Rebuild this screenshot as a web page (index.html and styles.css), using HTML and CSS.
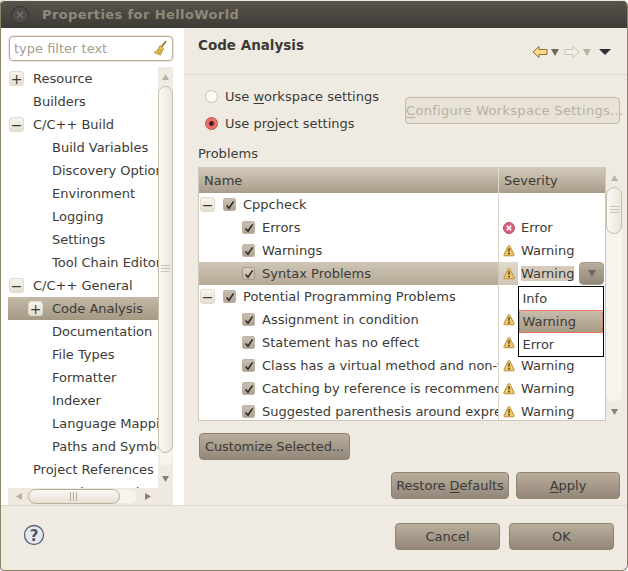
FILE: index.html
```html
<!DOCTYPE html>
<html lang="en">
<head>
<meta charset="utf-8">
<title>Properties for HelloWorld</title>
<link rel="stylesheet" href="styles.css">
</head>
<body>
<svg class="defs" width="0" height="0" aria-hidden="true">
  <defs>
    <symbol id="warn" viewBox="0 0 12 13">
      <path d="M6 1.500 Q6.600 1.500 7 2.300 L11 10.400 Q11.500 11.800 10.200 11.800 H1.800 Q.5 11.800 1 10.400 L5 2.300 Q5.400 1.500 6 1.500Z" fill="#f0c766" stroke="#b78f3c" stroke-linejoin="round"/>
      <path d="M5.200 4.200h1.600l-.3 4h-1zM5.200 9h1.600v1.500h-1.600z" fill="#4a3a20"/>
    </symbol>
    <symbol id="err" viewBox="0 0 12 12">
      <circle cx="6" cy="6" r="5.500" fill="#d9607a" stroke="#b65065"/>
      <path d="M3.800 3.800l4.400 4.400M8.200 3.800l-4.400 4.400" stroke="#fff" stroke-width="1.600"/>
    </symbol>
    <symbol id="chk" viewBox="0 0 12 12">
      <path d="M2.600 6.400l2.400 2.800L9.600 2.400" fill="none" stroke="#2d2a26" stroke-width="1.600"/>
    </symbol>
    <symbol id="up" viewBox="0 0 7 6"><path d="M3.500 0L7 6H0z"/></symbol>
    <symbol id="down" viewBox="0 0 7 6"><path d="M0 0H7L3.500 6z"/></symbol>
    <symbol id="left" viewBox="0 0 6 7"><path d="M0 3.500L6 0V7z"/></symbol>
    <symbol id="right" viewBox="0 0 6 7"><path d="M6 3.500L0 7V0z"/></symbol>
    <symbol id="grip-v" viewBox="0 0 9 9"><path d="M0 .5H9M0 3.500H9M0 6.500H9" stroke="#c9c2b5" fill="none"/></symbol>
    <symbol id="grip-h" viewBox="0 0 9 9"><path d="M.5 0V9M3.500 0V9M6.500 0V9" stroke="#b5ac9c" fill="none"/></symbol>
  </defs>
</svg>
<div class="window">
  <header class="titlebar">
    <span class="close-btn"><svg viewBox="0 0 10 10" width="10" height="10"><path d="M2 2l6 6M8 2l-6 6" stroke="#77736c" stroke-width="1.400"/></svg></span>
    <span class="title">Properties for HelloWorld</span>
  </header>
  <div class="main">
    <aside class="side">
      <div class="filter">
        <span class="filter-text">type filter text</span>
        <svg class="broom" width="14" height="17" viewBox="0 0 14 17"><path d="M13 1L8.500 7" stroke="#9b7a3a" stroke-width="1.800"/><path d="M7 5.500l3.500 3L7.500 15 1 12.500C3.500 11.500 5.500 9 7 5.500z" fill="#e8c34e" stroke="#a98a34" stroke-width=".8"/><path d="M6 9l-1 4M8 9.500L6.500 14" stroke="#a98a34" stroke-width=".7"/></svg>
      </div>
      <div class="tree-box">
        <div class="tree-view">
          <ul class="tree">
            <li class="node l0"><span class="exp">+</span><span>Resource</span></li>
            <li class="node l0"><span class="noexp"></span><span>Builders</span></li>
            <li class="node l0"><span class="exp">&minus;</span><span>C/C++ Build</span></li>
            <li class="node l1"><span>Build Variables</span></li>
            <li class="node l1"><span>Discovery Options</span></li>
            <li class="node l1"><span>Environment</span></li>
            <li class="node l1"><span>Logging</span></li>
            <li class="node l1"><span>Settings</span></li>
            <li class="node l1"><span>Tool Chain Editor</span></li>
            <li class="node l0"><span class="exp">&minus;</span><span>C/C++ General</span></li>
            <li class="node l1 sel"><span class="exp exp-sel">+</span><span>Code Analysis</span></li>
            <li class="node l1"><span>Documentation</span></li>
            <li class="node l1"><span>File Types</span></li>
            <li class="node l1"><span>Formatter</span></li>
            <li class="node l1"><span>Indexer</span></li>
            <li class="node l1"><span>Language Mappings</span></li>
            <li class="node l1"><span>Paths and Symbols</span></li>
            <li class="node l0"><span class="noexp"></span><span>Project References</span></li>
            <li class="node l0"><span class="noexp"></span><span>Run/Debug Settings</span></li>
          </ul>
          <div class="vscroll tree-vs">
            <svg class="arr" width="7" height="6"><use href="#up"/></svg>
            <div class="vtrack"><div class="vthumb tree-thumb"><svg width="9" height="9"><use href="#grip-v"/></svg></div></div>
            <svg class="arr arr-mid" width="7" height="6"><use href="#down"/></svg>
          </div>
        </div>
        <div class="hscroll">
          <svg class="arr" width="6" height="7"><use href="#left"/></svg>
          <div class="htrack"><div class="hthumb"><svg width="9" height="9"><use href="#grip-h"/></svg></div></div>
          <svg class="arr arr-mid" width="6" height="7"><use href="#right"/></svg>
        </div>
      </div>
    </aside>
    <section class="pane">
      <div class="pane-head">
        <h1 class="pane-title">Code Analysis</h1>
        <div class="nav">
          <svg width="16" height="14" viewBox="0 0 16 14"><path d="M1 7L7 1.500V4.500H15V9.500H7V12.500Z" fill="#fbd98a" stroke="#8a7230" stroke-width="1"/></svg>
          <svg class="nav-a" width="8" height="7"><use href="#down"/></svg>
          <svg class="nav-gap" width="16" height="14" viewBox="0 0 16 14"><path d="M15 7L9 1.500V4.500H1V9.500H9V12.500Z" fill="#f2efe9" stroke="#c9c6c0" stroke-width="1"/></svg>
          <svg class="nav-b" width="8" height="7"><use href="#down"/></svg>
          <svg class="nav-c" width="12" height="6" viewBox="0 0 12 6"><path d="M0 0H12L6 6z"/></svg>
        </div>
      </div>
      <div class="pane-body">
        <div class="scope">
          <div class="radios">
            <label class="radio-row"><span class="radio"></span><span>Use <u>w</u>orkspace settings</span></label>
            <label class="radio-row"><span class="radio radio-on"></span><span>Use pr<u>o</u>ject settings</span></label>
          </div>
          <button class="btn btn-off" type="button"><u>C</u>onfigure Workspace Settings...</button>
        </div>
        <div class="problems-label">Problems</div>
        <div class="table-wrap">
          <div class="table">
            <div class="thead"><div class="th th-name">Name</div><div class="th">Severity</div></div>
            <div class="row group"><div class="c-name"><span class="exp">&minus;</span><span class="check"><svg width="12" height="12"><use href="#chk"/></svg></span><span class="lbl">Cppcheck</span></div><div class="c-sev"></div></div>
            <div class="row"><div class="c-name child"><span class="check"><svg width="12" height="12"><use href="#chk"/></svg></span><span class="lbl">Errors</span></div><div class="c-sev"><svg class="sev-i" width="12" height="12"><use href="#err"/></svg><span>Error</span></div></div>
            <div class="row"><div class="c-name child"><span class="check"><svg width="12" height="12"><use href="#chk"/></svg></span><span class="lbl">Warnings</span></div><div class="c-sev"><svg class="sev-i" width="12" height="13"><use href="#warn"/></svg><span>Warning</span></div></div>
            <div class="row row-sel"><div class="c-name child"><span class="check"><svg width="12" height="12"><use href="#chk"/></svg></span><span class="lbl">Syntax Problems</span></div><div class="c-sev"><svg class="sev-i" width="12" height="13"><use href="#warn"/></svg><span class="sev-text-sel">Warning</span><span class="drop-btn"><svg width="8" height="7"><use href="#down"/></svg></span></div></div>
            <div class="row group"><div class="c-name"><span class="exp">&minus;</span><span class="check"><svg width="12" height="12"><use href="#chk"/></svg></span><span class="lbl">Potential Programming Problems</span></div><div class="c-sev"></div></div>
            <div class="row"><div class="c-name child"><span class="check"><svg width="12" height="12"><use href="#chk"/></svg></span><span class="lbl">Assignment in condition</span></div><div class="c-sev"><svg class="sev-i" width="12" height="13"><use href="#warn"/></svg></div></div>
            <div class="row"><div class="c-name child"><span class="check"><svg width="12" height="12"><use href="#chk"/></svg></span><span class="lbl">Statement has no effect</span></div><div class="c-sev"><svg class="sev-i" width="12" height="13"><use href="#warn"/></svg></div></div>
            <div class="row"><div class="c-name child"><span class="check"><svg width="12" height="12"><use href="#chk"/></svg></span><span class="lbl">Class has a virtual method and non-virtual destructor</span></div><div class="c-sev"><svg class="sev-i" width="12" height="13"><use href="#warn"/></svg><span>Warning</span></div></div>
            <div class="row"><div class="c-name child"><span class="check"><svg width="12" height="12"><use href="#chk"/></svg></span><span class="lbl">Catching by reference is recommended</span></div><div class="c-sev"><svg class="sev-i" width="12" height="13"><use href="#warn"/></svg><span>Warning</span></div></div>
            <div class="row"><div class="c-name child"><span class="check"><svg width="12" height="12"><use href="#chk"/></svg></span><span class="lbl">Suggested parenthesis around expression</span></div><div class="c-sev"><svg class="sev-i" width="12" height="13"><use href="#warn"/></svg><span>Warning</span></div></div>
            <ul class="dropdown">
              <li class="opt">Info</li>
              <li class="opt opt-sel">Warning</li>
              <li class="opt">Error</li>
            </ul>
          </div>
          <div class="vscroll table-vs">
            <svg class="arr" width="7" height="6"><use href="#up"/></svg>
            <div class="vtrack"><div class="rail"><div class="vthumb table-thumb"><svg width="9" height="9"><use href="#grip-v"/></svg></div></div></div>
            <svg class="arr arr-mid" width="7" height="6"><use href="#down"/></svg>
          </div>
        </div>
        <div class="customize-row"><button class="btn btn-customize" type="button">Customize Selected...</button></div>
        <div class="apply-row">
          <button class="btn btn-restore" type="button">Restore <u>D</u>efaults</button>
          <button class="btn btn-apply" type="button"><u>A</u>pply</button>
        </div>
      </div>
    </section>
  </div>
  <footer class="footer">
    <svg class="help" width="22" height="22" viewBox="0 0 22 22"><circle cx="11" cy="11" r="9.500" fill="#e6e8ef" stroke="#5c6478" stroke-width="1.300"/><text x="11" y="16.500" text-anchor="middle" class="help-q">?</text></svg>
    <div class="footer-btns">
      <button class="btn btn-foot" type="button">Cancel</button>
      <button class="btn btn-foot" type="button">OK</button>
    </div>
  </footer>
</div>
</body>
</html>
```
FILE: styles.css
```css
* { box-sizing: border-box; }
html, body { margin: 0; padding: 0; }
body {
  width: 628px;
  height: 571px;
  overflow: hidden;
  background: #fff;
  font-family: "DejaVu Sans", sans-serif;
  font-size: 13px;
  color: #3c3b37;
}
.defs { position: absolute; }
ul { list-style: none; margin: 0; padding: 0; }
u { text-underline-offset: 2px; }

.window {
  width: 628px;
  height: 571px;
  display: flex;
  flex-direction: column;
  background: #f0ebe2;
  border-left: 1px solid #8c8468;
  border-right: 1px solid #8c8468;
  border-bottom: 1px solid #8c8468;
  border-radius: 4px 6px 6px 4px;
  overflow: hidden;
}
.titlebar {
  height: 27px;
  flex: none;
  display: flex;
  align-items: center;
  background: linear-gradient(#57544c, #3d3b36);
  padding: 0 0 0 11px;
  margin: 1px -1px 0;
  border-radius: 5px 5px 0 0;
}
.close-btn {
  width: 18px;
  height: 18px;
  border-radius: 50%;
  background: #4f4c47;
  border: 1px solid #35332f;
  display: flex;
  align-items: center;
  justify-content: center;
  flex: none;
}
.title {
  margin-left: 13px;
  font-weight: bold;
  font-size: 13px;
  letter-spacing: .4px;
  color: #8f897c;
}

.main { flex: 1; display: flex; min-height: 0; }
.side {
  width: 183px;
  flex: none;
  background: #fff;
  padding: 8px 11px 0 7px;
  display: flex;
  flex-direction: column;
}
.filter {
  height: 25px;
  flex: none;
  margin: 0 0 6px 1px;
  background: #fff;
  border: 1px solid #b3a78f;
  border-radius: 4px;
  box-shadow: 0 0 0 1px #f0ebe2;
  display: flex;
  align-items: center;
  justify-content: space-between;
  padding: 0 5px 0 4px;
}
.filter-text { color: #a69d8c; }
.broom { flex: none; }

.tree-box { flex: 1; display: flex; flex-direction: column; min-height: 0; }
.tree-view { flex: 1; display: flex; min-height: 0; }
.tree {
  flex: 1;
  min-width: 0;
  overflow: hidden;
  white-space: nowrap;
  background: #fff;
}
.node { height: 23px; display: flex; align-items: center; }
.l0 { padding-left: 1px; }
.l0 .exp, .l0 .noexp { margin-right: 9px; }
.noexp { width: 15px; flex: none; }
.l1 { padding-left: 44px; }
.sel {
  background: linear-gradient(#c4b9a8, #a59984);
}
.exp {
  width: 15px;
  height: 15px;
  flex: none;
  display: flex;
  align-items: center;
  justify-content: center;
  font-size: 14px;
  line-height: 1;
  color: #3c3b37;
  border-radius: 3px;
  background: linear-gradient(#f7f4ee, #e5dfd3);
  border: 1px solid #e0d9cc;
}
.exp-sel { margin-left: -24px; margin-right: 9px; }

.vscroll {
  width: 16px;
  flex: none;
  background: #f0ebe2;
  display: flex;
  flex-direction: column;
  align-items: center;
  padding: 7px 0 6px;
  gap: 4px;
}
.tree-vs { width: 15px; }
.arr { fill: #b9b0a0; flex: none; display: block; }
.arr-mid { fill: #85807a; }
.vtrack { flex: 1; width: 100%; min-height: 0; }
.vthumb {
  width: 100%;
  border: 1px solid #c6bdac;
  border-radius: 8px;
  background: linear-gradient(90deg, #fbf9f6, #ece6db);
  display: flex;
  align-items: center;
  justify-content: center;
}
.tree-thumb { height: 367px; margin-top: 2px; box-shadow: 0 14px 0 -1px #f7f4ee; }
.table-vs { padding-top: 8px; }
.rail { margin-top: 2px; height: 215px; border-radius: 8px; background: #f7f4ee; }
.table-thumb { height: 47px; }

.hscroll {
  height: 17px;
  flex: none;
  background: #efe9df;
  display: flex;
  align-items: center;
  padding: 0 22px 0 8px;
  gap: 3px;
}
.htrack { flex: 1; min-width: 0; }
.hthumb {
  width: 92px;
  height: 15px;
  margin-left: 3px;
  border: 1px solid #b9af9d;
  border-radius: 8px;
  background: linear-gradient(#fbf9f6, #e6e0d4);
  box-shadow: 18px 0 0 -1px #f7f4ee;
  display: flex;
  align-items: center;
  justify-content: center;
}

.pane { flex: 1; min-width: 0; display: flex; flex-direction: column; background: #f0ebe2; }
.pane-head {
  height: 47px;
  flex: none;
  display: flex;
  justify-content: space-between;
  align-items: flex-start;
  border-bottom: 1px solid #e0d9cc;
  padding: 9px 16px 0 14px;
}
.pane-title { margin: 0; font-size: 13.5px; line-height: 17px; font-weight: bold; color: #3c3b37; }
.nav { display: flex; align-items: center; margin-top: 8px; }
.nav-a { fill: #6f695e; margin-left: 3px; }
.nav-b { fill: #b9b0a0; margin-left: 3px; }
.nav-gap { margin-left: 5px; }
.nav-c { fill: #2f2d33; margin-left: 8px; }

.pane-body { flex: 1; min-height: 0; padding: 9px 5px 0 14px; display: flex; flex-direction: column; }
.scope { display: flex; justify-content: space-between; height: 61px; padding-right: 2px; flex: none; }
.radios { display: flex; flex-direction: column; gap: 4px; padding-left: 7px; padding-top: 1px; }
.radio-row { display: flex; align-items: center; height: 23px; gap: 7px; }
.radio {
  width: 13px;
  height: 13px;
  border-radius: 50%;
  background: #fbf9f5;
  border: 1px solid #c9c1b1;
  flex: none;
}
.radio-on {
  border-color: #b5524a;
  background: radial-gradient(circle, #2d2623 0 2px, #e9605a 2.500px, #f08a80 100%);
}
.btn {
  font-family: "DejaVu Sans", sans-serif;
  font-size: 13px;
  color: #3c3b37;
  height: 27px;
  padding: 0;
  border: 1px solid #8f8470;
  border-radius: 4px;
  background: linear-gradient(#b9ad9b, #93877a);
  display: block;
  white-space: nowrap;
}
.btn-off {
  width: 215px;
  margin-top: 13px;
  background: #e8e2d7;
  border-color: #c3baa9;
  color: #b9b0a0;
  letter-spacing: .3px;
}
.problems-label { height: 22px; line-height: 17px; flex: none; }
.table-wrap { height: 254px; flex: none; display: flex; }
.table {
  width: 408px;
  flex: none;
  position: relative;
  background: #fff;
  border: 1px solid #cfc7b8;
  border-top: 0;
  overflow: hidden;
}
.thead {
  height: 26px;
  display: grid;
  grid-template-columns: 300px 1fr;
  background: linear-gradient(#d3cabb, #a99d8a);
}
.th { display: flex; align-items: center; padding-left: 5px; padding-top: 1px; }
.th-name { border-right: 1px solid #e0d9cc; }
.row {
  height: 23px;
  display: grid;
  grid-template-columns: 300px 1fr;
  white-space: nowrap;
}
.c-name {
  display: flex;
  align-items: center;
  overflow: hidden;
  padding-left: 1px;
  border-right: 1px solid #dcd5c8;
}
.c-name.child { padding-left: 43px; }
.c-sev { display: flex; align-items: center; padding-left: 4px; min-width: 0; }
.sev-i { margin-right: 6px; flex: none; }
.check {
  width: 13px;
  height: 13px;
  flex: none;
  margin-left: 8px;
  border-radius: 2px;
  background: linear-gradient(#c9bfb0, #aea392);
  border: 1px solid #bdb3a3;
  display: flex;
  align-items: center;
  justify-content: center;
}
.c-name.child .check { margin-left: 0; }
.check svg { margin: -1px; }
.lbl { margin-left: 7px; }
.row-sel { background: linear-gradient(#cfc6b6, #b5a996); }
.row-sel .check { background: linear-gradient(#d8d0c2, #c2b8a7); border-color: #a79b88; }
.row-sel .c-name { border-right-color: #cfc7b8; }
.row-sel .c-sev { background: linear-gradient(#e0d9cb, #d0c6b6) 0 0 / 19px 100% no-repeat, #fff; }
.sev-text-sel { background: #d6cbbb; }
.drop-btn {
  width: 25px;
  height: 23px;
  margin-left: 5px;
  border-radius: 4px;
  border: 1px solid #a79b88;
  background: linear-gradient(#b9ad9b, #93877a);
  display: flex;
  align-items: center;
  justify-content: center;
  flex: none;
  fill: #6f695e;
}
.dropdown {
  position: absolute;
  left: 319px;
  top: 119px;
  width: 86px;
  height: 71px;
  background: #fff;
  border: 1px solid #000;
}
.opt { height: 23px; line-height: 23px; padding-left: 3.500px; }
.opt-sel {
  background: linear-gradient(#c8bdac, #a79b86);
  outline: 1px dotted #e8604c;
  outline-offset: -1px;
}

.customize-row { margin-top: 12px; flex: none; padding-left: 1px; }
.btn-customize { width: 151px; letter-spacing: -.1px; }
.apply-row { display: flex; justify-content: flex-end; gap: 7px; margin-top: 12px; padding-right: 2px; flex: none; }
.btn-restore { width: 118px; }
.btn-apply { width: 104px; }

.footer {
  height: 65px;
  flex: none;
  border-top: 1px solid #e0d9cc;
  display: flex;
  align-items: flex-start;
  justify-content: space-between;
  padding: 17px 13px 0 22px;
}
.help { margin-top: 1px; }
.help-q { font-family: "DejaVu Sans", sans-serif; font-weight: bold; font-size: 15px; fill: #4e566a; }
.footer-btns { display: flex; gap: 9px; }
.btn-foot { width: 105px; }
```
